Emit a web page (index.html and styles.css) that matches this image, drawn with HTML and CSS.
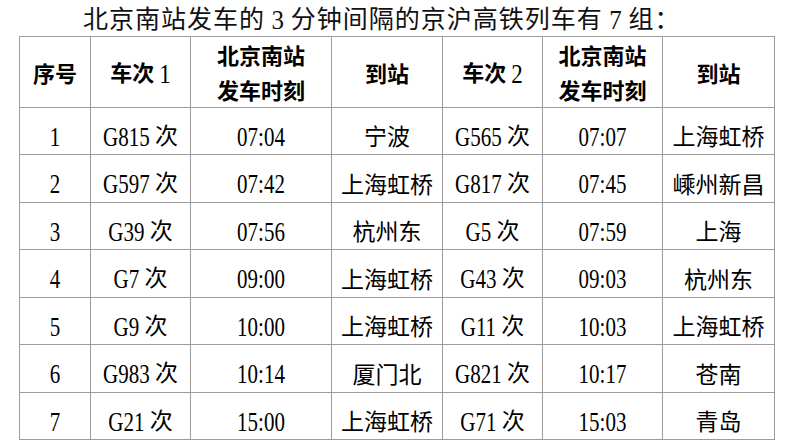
FILE: index.html
```html
<!DOCTYPE html>
<html lang="zh">
<head>
<meta charset="utf-8">
<link rel="stylesheet" href="styles.css">
</head>
<body>
<div class="page">
  <h1 class="title">北京南站发车的 <span class="n">3</span> 分钟间隔的京沪高铁列车有 <span class="n">7</span> 组：</h1>
  <table class="grid">
    <colgroup>
      <col class="c1"><col class="c2"><col class="c3"><col class="c4"><col class="c5"><col class="c6"><col class="c7">
    </colgroup>
    <thead>
      <tr>
        <th>序号</th>
        <th>车次 <span class="hn">1</span></th>
        <th>北京南站<br>发车时刻</th>
        <th>到站</th>
        <th>车次 <span class="hn">2</span></th>
        <th>北京南站<br>发车时刻</th>
        <th>到站</th>
      </tr>
    </thead>
    <tbody>
      <tr class="ra"><td><span class="n">1</span></td><td><span class="n">G815</span> 次</td><td><span class="n">07:04</span></td><td>宁波</td><td><span class="n">G565</span> 次</td><td><span class="n">07:07</span></td><td>上海虹桥</td></tr>
      <tr class="rb"><td><span class="n">2</span></td><td><span class="n">G597</span> 次</td><td><span class="n">07:42</span></td><td>上海虹桥</td><td><span class="n">G817</span> 次</td><td><span class="n">07:45</span></td><td>嵊州新昌</td></tr>
      <tr class="ra"><td><span class="n">3</span></td><td><span class="n">G39</span> 次</td><td><span class="n">07:56</span></td><td>杭州东</td><td><span class="n">G5</span> 次</td><td><span class="n">07:59</span></td><td>上海</td></tr>
      <tr class="rb"><td><span class="n">4</span></td><td><span class="n">G7</span> 次</td><td><span class="n">09:00</span></td><td>上海虹桥</td><td><span class="n">G43</span> 次</td><td><span class="n">09:03</span></td><td>杭州东</td></tr>
      <tr class="ra"><td><span class="n">5</span></td><td><span class="n">G9</span> 次</td><td><span class="n">10:00</span></td><td>上海虹桥</td><td><span class="n">G11</span> 次</td><td><span class="n">10:03</span></td><td>上海虹桥</td></tr>
      <tr class="rb"><td><span class="n">6</span></td><td><span class="n">G983</span> 次</td><td><span class="n">10:14</span></td><td>厦门北</td><td><span class="n">G821</span> 次</td><td><span class="n">10:17</span></td><td>苍南</td></tr>
      <tr class="ra"><td><span class="n">7</span></td><td><span class="n">G21</span> 次</td><td><span class="n">15:00</span></td><td>上海虹桥</td><td><span class="n">G71</span> 次</td><td><span class="n">15:03</span></td><td>青岛</td></tr>
    </tbody>
  </table>
</div>
</body>
</html>
```
FILE: styles.css
```css
html, body {
  margin: 0;
  padding: 0;
  background: #ffffff;
}
.page {
  width: 800px;
  height: 443px;
  overflow: hidden;
  font-family: "Noto Sans CJK SC", "Noto Sans", sans-serif;
  color: #111;
}
.title {
  margin: 0;
  height: 36px;
  padding-left: 83px;
  font-size: 25px;
  font-weight: 400;
  line-height: 36px;
  letter-spacing: 1px;
  white-space: nowrap;
  box-sizing: border-box;
  padding-top: 0;
  position: relative;
  top: -1px;
}
.title .n {
  font-family: "Liberation Serif", "Times New Roman", serif;
  letter-spacing: 0;
}
.grid {
  margin-left: 19px;
  border-collapse: collapse;
  table-layout: fixed;
  width: 756px;
}
.c1 { width: 71px; }
.c2 { width: 100px; }
.c3 { width: 141px; }
.c4 { width: 111px; }
.c5 { width: 100px; }
.c6 { width: 120px; }
.c7 { width: 112px; }
.grid th, .grid td {
  border: 1px solid #9c9c9c;
  text-align: center;
  padding: 0;
  white-space: nowrap;
  color: #000;
}
.grid th {
  height: 66px;
  font-size: 22px;
  font-weight: 700;
  line-height: 35px;
}
.grid td {
  font-size: 23px;
  line-height: 30px;
  padding-top: 8px;
  box-sizing: border-box;
}
.ra td { height: 47px; }
.rb td { height: 48px; }
.hn {
  font-family: "Liberation Serif", "Times New Roman", serif;
  font-weight: 400;
  font-size: 23px;
  display: inline-block;
  transform: scaleY(1.2);
}
.n {
  font-family: "Liberation Serif", "Times New Roman", serif;
  font-size: 21px;
  display: inline-block;
  transform: scaleY(1.3);
}
.title .n {
  font-size: 25px;
  transform: scaleY(1.1);
}
```
